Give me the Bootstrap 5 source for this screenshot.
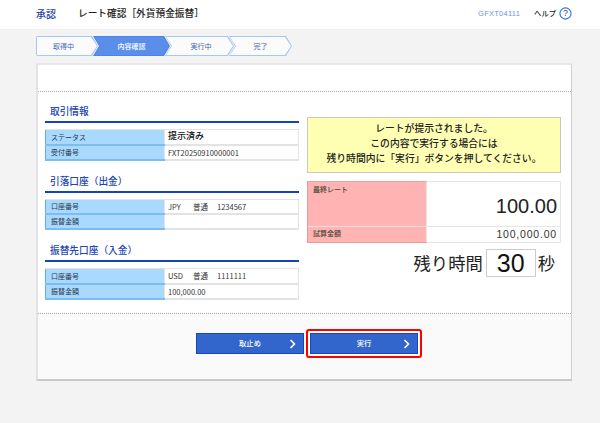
<!DOCTYPE html>
<html lang="ja">
<head>
<meta charset="utf-8">
<link href="https://cdn.jsdelivr.net/npm/bootstrap@5.3.0/dist/css/bootstrap.min.css" rel="stylesheet">
<style>
html,body{height:423px;overflow:hidden}
body{background:#f3f3f3;font-family:"Noto Sans CJK JP","Liberation Sans",sans-serif;color:#222;font-size:8px;line-height:1.2}
.top-bar{height:30px;background:#fff;border-bottom:1px solid #eee;padding:0 28px 2px 36px}
.ttl-a{font-size:10px;font-weight:500;color:#1f3f9f;width:42px}
.ttl-b{font-size:9.7px;font-weight:500;color:#222}
.scr-id{font-family:"Liberation Sans",sans-serif;font-size:7.5px;letter-spacing:.25px;color:#6e94e6;margin-right:14px}
.help-t{font-size:7.3px;font-weight:500;color:#222;margin-right:3px}
.flow-row{margin:6px 0 0 36px;height:20px}
.flow-step{position:relative;height:20px;margin-left:-5px;font-size:7px;color:#3c64b8;background:#a9c5f2;clip-path:polygon(0 0,calc(100% - 6px) 0,100% 50%,calc(100% - 6px) 100%,0 100%,6px 50%)}
.flow-step::before{content:"";position:absolute;inset:1px;background:#fbfbfb;clip-path:polygon(0 0,calc(100% - 6px) 0,100% 50%,calc(100% - 6px) 100%,0 100%,6px 50%);z-index:0}
.flow-step span{position:relative;z-index:1}
.flow-first{margin-left:0;padding-right:7px;border-radius:2px 0 0 2px;clip-path:polygon(0 0,calc(100% - 6px) 0,100% 50%,calc(100% - 6px) 100%,0 100%)}
.flow-first::before{clip-path:polygon(0 0,calc(100% - 6px) 0,100% 50%,calc(100% - 6px) 100%,0 100%)}
.flow-on{color:#fff;background:#4f82e6;z-index:2;font-weight:500}
.flow-on::before{background:#5b8dea}
.w-1{width:62px}.w-2{width:77px}.w-3{width:69px;padding-left:3px}.w-4{width:63px}
.sheet{width:536px;height:318px;margin:7px 0 0 36px;background:#fff;border-top:2px solid #e8e8e8;border-left:2px solid #e2e2e2;border-right:1px solid #cfcfcf;border-bottom:2px solid #c8c8c8}
.sheet-top{height:27px;border-bottom:1px dotted #a8a8a8}
.sheet-main{height:222px;padding:0 10px 0 7px;border-bottom:1px dotted #a8a8a8}
.sheet-foot{height:65px;background:#fafafa;padding:15px 0 0 9px}
.left-col{width:254px}
.right-col{width:254px;margin-left:8px;padding-top:25px}
.sec-h{height:31px;border-bottom:2px solid #1544b8;font-size:9.7px;font-weight:500;color:#2146b4;padding:12px 0 0 5px;line-height:14px}
.info-grid{width:254px;margin:6px 0 1px;table-layout:fixed;border-collapse:collapse;background:#fff}
.info-grid th,.info-grid td{height:15px;padding:0 0 0 4px;font-size:7px;font-weight:400;border:1px solid #e3e3e3;border-bottom-width:2px;vertical-align:middle}
.info-grid th{width:119px;background:#a9d9ff;border-left:1px solid #6ba9e0;border-bottom-color:#7dbcf0;color:#2b3a4a;padding-left:5px}
.info-grid td{padding-left:3px;color:#333;font-size:7.5px}
.info-grid td.st-val{font-size:9px;font-weight:500;color:#111}
.acct-a{display:inline-block;width:25px}
.acct-b{display:inline-block;width:24px}
.notice{height:56px;background:#ffffb4;border:1px solid #c9c9c0;font-size:9.8px;font-weight:500;line-height:15px;color:#222;padding-top:3px}
.rate-grid{width:254px;margin-top:8px;border-collapse:collapse;table-layout:fixed}
.rate-grid th{width:119px;background:#ffb3b3;font-size:7px;font-weight:500;color:#443;vertical-align:top;padding:3px 0 0 5px;border-top:1px solid #eba0a0;border-left:1px solid #e79a9a}
.rate-grid td{text-align:right;vertical-align:middle;border:1px solid #e6e6e6;padding-right:3px;font-family:"Liberation Sans",sans-serif}
.r-main{height:45px;font-size:20px;color:#222;padding-top:4px}
.r-sub{height:16px;font-size:10.5px;letter-spacing:.8px;color:#333}
.r-row th.r-lab{padding-top:2px;border-top:1px solid #e8e0e0;border-bottom:1px solid #e79a9a}
.remain{height:28px;margin-top:6px;font-size:17.3px;color:#222;padding-right:6px}
.remain-box{width:50px;height:28px;margin:0 2px 0 3px;border:1px solid #ccc;background:#fff;font-size:25px;font-family:"Liberation Sans",sans-serif;color:#111}
.act-btn{width:108px;height:21px;padding:0;border-radius:0;background:#3366cc;border:1px solid #1546be;color:#fff;font-size:7.3px;font-weight:500;position:relative}
.act-btn svg{position:absolute;right:6px;top:5px}
.act-btn:hover{background:#3366cc;color:#fff}
.go-ring{padding:2px;margin-left:2px;border:2px solid #f00;border-radius:3px;background:#fff}
.go-ring .act-btn{display:block}
.gap-off{margin-top:4px}
</style>
</head>
<body>
<header class="top-bar d-flex align-items-center">
  <div class="ttl-a">承認</div>
  <div class="ttl-b">レート確認［外貨預金振替］</div>
  <div class="ms-auto d-flex align-items-center">
    <span class="scr-id">GFXT04111</span>
    <span class="help-t">ヘルプ</span>
    <svg width="13" height="13" viewBox="0 0 14 14" role="img" aria-label="ヘルプ"><circle cx="7" cy="7" r="6" fill="#fff" stroke="#2d6fe0" stroke-width="1.2"/><text x="7" y="10.2" text-anchor="middle" font-size="9.5" font-family="Liberation Sans" fill="#23408f">?</text></svg>
  </div>
</header>
<nav class="flow-row d-flex">
  <div class="flow-step flow-first w-1 d-flex align-items-center justify-content-center"><span>取得中</span></div>
  <div class="flow-step flow-on w-2 d-flex align-items-center justify-content-center"><span>内容確認</span></div>
  <div class="flow-step w-3 d-flex align-items-center justify-content-center"><span>実行中</span></div>
  <div class="flow-step w-4 d-flex align-items-center justify-content-center"><span>完了</span></div>
</nav>
<main class="sheet">
  <div class="sheet-top"></div>
  <div class="sheet-main d-flex">
    <section class="left-col">
      <h2 class="sec-h m-0">取引情報</h2>
      <table class="info-grid"><tbody>
        <tr><th>ステータス</th><td class="st-val">提示済み</td></tr>
        <tr><th>受付番号</th><td>FXT20250910000001</td></tr>
      </tbody></table>
      <h2 class="sec-h m-0">引落口座（出金）</h2>
      <table class="info-grid"><tbody>
        <tr><th>口座番号</th><td><span class="acct-a">JPY</span><span class="acct-b">普通</span>1234567</td></tr>
        <tr><th>振替金額</th><td></td></tr>
      </tbody></table>
      <h2 class="sec-h m-0">振替先口座（入金）</h2>
      <table class="info-grid mb-0"><tbody>
        <tr><th>口座番号</th><td><span class="acct-a">USD</span><span class="acct-b">普通</span>1111111</td></tr>
        <tr><th>振替金額</th><td>100,000.00</td></tr>
      </tbody></table>
    </section>
    <section class="right-col">
      <div class="notice text-center">レートが提示されました。<br>この内容で実行する場合には<br>残り時間内に「実行」ボタンを押してください。</div>
      <table class="rate-grid"><tbody>
        <tr><th>最終レート</th><td class="r-main">100.00</td></tr>
        <tr class="r-row"><th class="r-lab">試算金額</th><td class="r-sub">100,000.00</td></tr>
      </tbody></table>
      <div class="remain d-flex align-items-center justify-content-end">
        <span>残り時間</span>
        <span class="remain-box d-flex align-items-center justify-content-center">30</span>
        <span>秒</span>
      </div>
    </section>
  </div>
  <div class="sheet-foot d-flex justify-content-center align-items-start">
    <button type="button" class="btn act-btn gap-off">取止め<svg width="8" height="10" viewBox="0 0 8 10"><path d="M1.5 1l4 4-4 4" fill="none" stroke="#fff" stroke-width="1.6"/></svg></button>
    <div class="go-ring"><button type="button" class="btn act-btn">実行<svg width="8" height="10" viewBox="0 0 8 10"><path d="M1.5 1l4 4-4 4" fill="none" stroke="#fff" stroke-width="1.6"/></svg></button></div>
  </div>
</main>
<script src="https://cdn.jsdelivr.net/npm/bootstrap@5.3.0/dist/js/bootstrap.bundle.min.js"></script>
</body>
</html>
